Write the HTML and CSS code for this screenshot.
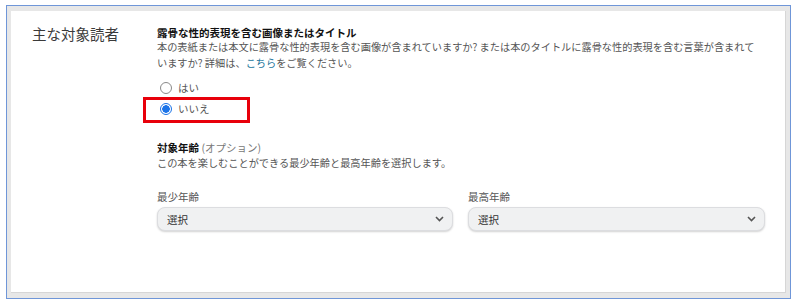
FILE: index.html
```html
<!DOCTYPE html>
<html lang="ja">
<head>
    <meta charset="UTF-8">
    <title>主な対象読者</title>
    <link rel="stylesheet" href="styles.css">
</head>
<body>
    <div class="frame">
        <div class="panel">
            <div class="section-title">主な対象読者</div>

            <div class="section-body">
                <div class="field-title">露骨な性的表現を含む画像またはタイトル</div>
                <p class="help">本の表紙または本文に露骨な性的表現を含む画像が含まれていますか? または本のタイトルに露骨な性的表現を含む言葉が含まれていますか? 詳細は、<a href="#">こちら</a>をご覧ください。</p>

                <div class="radios">
                    <label class="radio">
                        <span class="dot"></span>
                        <span>はい</span>
                    </label>
                    <label class="radio checked">
                        <span class="dot"></span>
                        <span>いいえ</span>
                        <span class="highlight"></span>
                    </label>
                </div>

                <div class="field-title age-title">対象年齢 <span class="optional">(オプション)</span></div>
                <p class="help">この本を楽しむことができる最少年齢と最高年齢を選択します。</p>

                <div class="age-row">
                    <div class="age-field">
                        <div class="age-label">最少年齢</div>
                        <div class="select">
                            <span>選択</span>
                            <svg width="9" height="6" viewBox="0 0 9 6"><path d="M1 1l3.5 3.5L8 1" fill="none" stroke="#555" stroke-width="1.6"/></svg>
                        </div>
                    </div>
                    <div class="age-field">
                        <div class="age-label">最高年齢</div>
                        <div class="select">
                            <span>選択</span>
                            <svg width="9" height="6" viewBox="0 0 9 6"><path d="M1 1l3.5 3.5L8 1" fill="none" stroke="#555" stroke-width="1.6"/></svg>
                        </div>
                    </div>
                </div>
            </div>
        </div>
    </div>
</body>
</html>
```

FILE: styles.css
```css
body {
    margin: 0;
    font-family: "Noto Sans CJK JP", "Noto Sans", sans-serif;
    background: #fff;
    color: #333;
}
.frame {
    box-sizing: border-box;
    margin: 5px 0 0 6px;
    width: 785px;
    height: 294px;
    border: 1px solid #6f96d8;
    background: #e7e7e7;
    padding: 5px 4px 5px 4px;
}
.panel {
    box-sizing: border-box;
    height: 100%;
    background: #fff;
    border-right: 1px solid #d6d6d6;
    border-bottom: 1px solid #d6d6d6;
    display: grid;
    grid-template-columns: 125px 607px;
    padding: 14px 0 0 21px;
}
.section-title {
    font-size: 14.5px;
    line-height: 20px;
    color: #3a3a3a;
    margin-top: -1px;
}
.field-title {
    font-size: 10.5px;
    font-weight: bold;
    line-height: 12px;
    color: #111;
    margin-top: 2px;
}
.help {
    margin: 0;
    font-size: 10.2px;
    line-height: 16px;
    color: #555;
}
.help a {
    color: #23759c;
    text-decoration: none;
}
.radios {
    margin-top: 6px;
}
.radio {
    position: relative;
    display: flex;
    align-items: center;
    gap: 6px;
    height: 21px;
    padding-left: 3px;
    font-size: 10.5px;
    color: #555;
}
.dot {
    box-sizing: border-box;
    width: 12px;
    height: 12px;
    border: 1px solid #8a8a8a;
    border-radius: 50%;
    background: #fff;
}
.checked .dot {
    border-color: #1a73e8;
    background: radial-gradient(circle, #1a73e8 0 3.5px, #fff 4px);
}
.highlight {
    position: absolute;
    left: -14px;
    top: -1px;
    width: 107px;
    height: 26px;
    box-sizing: border-box;
    border: 3px solid #e8000b;
}
.age-title {
    margin-top: 22px;
    line-height: 14px;
}
.optional {
    font-weight: normal;
    color: #777;
}
.age-row {
    display: grid;
    grid-template-columns: 296px 297px;
    gap: 15px;
    margin-top: 19px;
}
.age-label {
    font-size: 10.5px;
    line-height: 14px;
    color: #555;
}
.select {
    box-sizing: border-box;
    margin-top: 3px;
    height: 24px;
    display: flex;
    align-items: center;
    justify-content: space-between;
    padding: 0 8px 0 9px;
    background: #f0f1f2;
    border: 1px solid #dcdde0;
    border-radius: 8px;
    box-shadow: 0 1px 2px rgba(0, 0, 0, 0.18);
    font-size: 10.5px;
    color: #333;
}
```
